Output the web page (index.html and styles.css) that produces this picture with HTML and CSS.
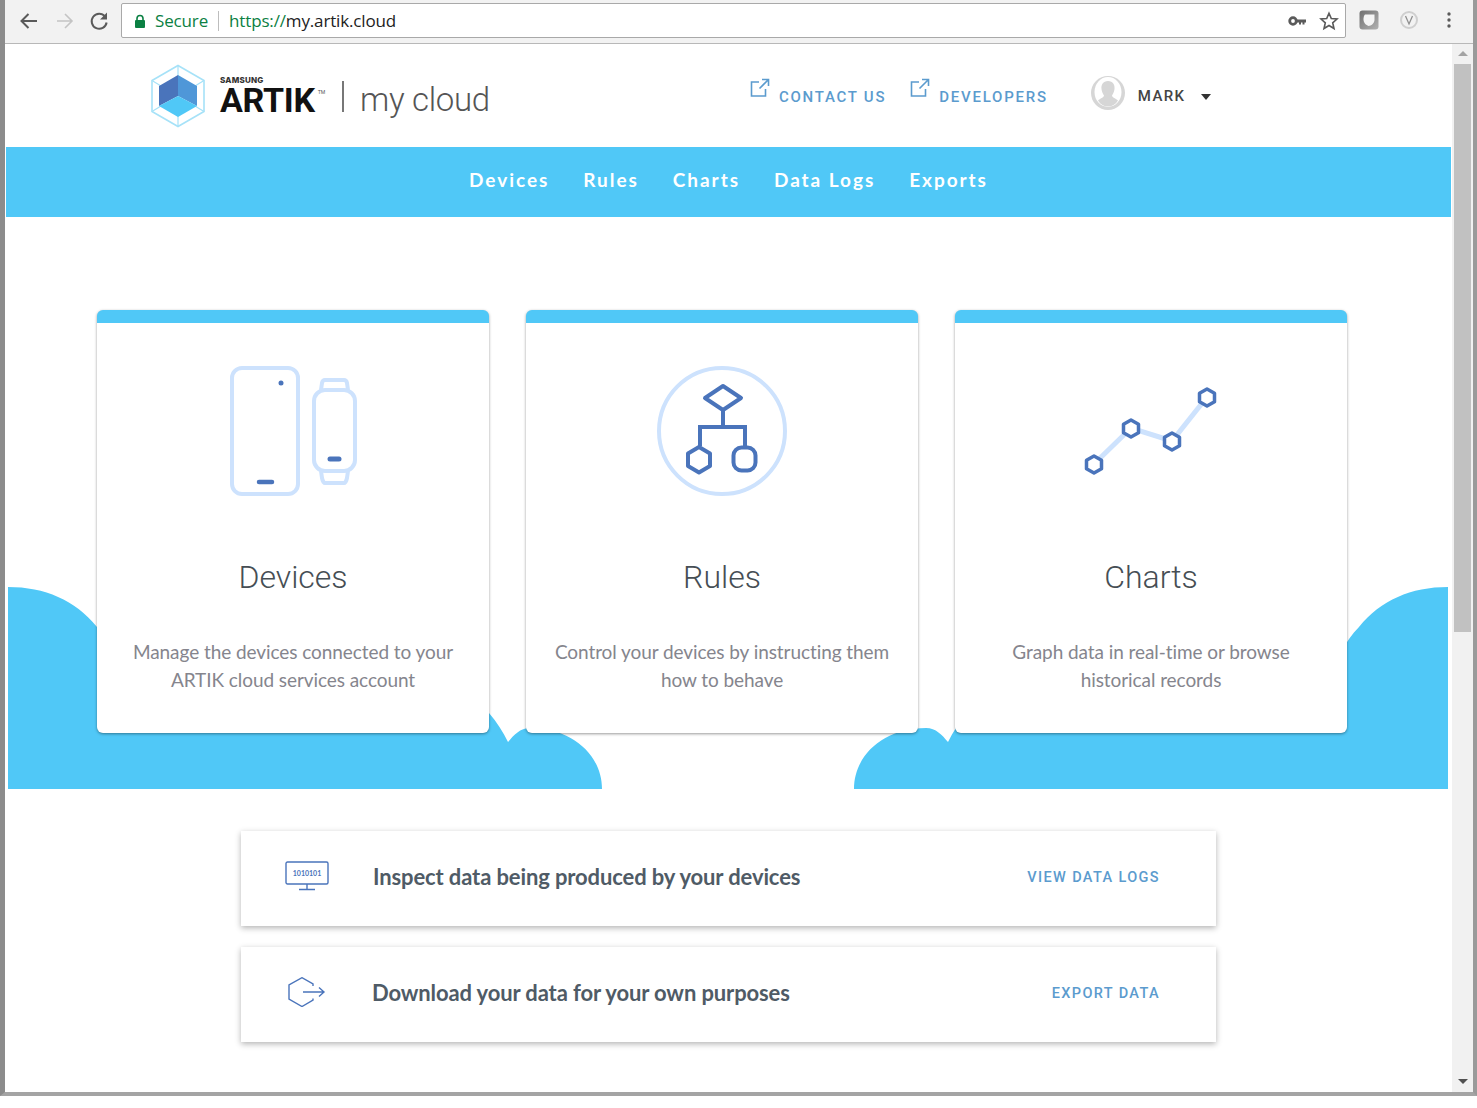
FILE: index.html
```html
<!DOCTYPE html>
<html lang="en">
<head>
<meta charset="utf-8">
<title>my cloud</title>
<link rel="stylesheet" href="styles.css">
</head>
<body>
<div class="window">
  <div class="toolbar">
    <svg class="tb-nav" width="100" height="24" viewBox="0 0 100 24" fill="none">
      <path d="M20 12H5M11.500 5l-7 7 7 7" stroke="#5a5a5a" stroke-width="2"/>
      <path d="M40 12h15M48 5l7 7-7 7" stroke="#c4c4c4" stroke-width="1.600"/>
      <path d="M88 7.500a7.500 7.500 0 1 0 1.600 6" stroke="#5a5a5a" stroke-width="2"/>
      <path d="M90 3.500v7h-7z" fill="#5a5a5a"/>
    </svg>
    <div class="omnibox">
      <svg class="lock" width="12" height="14" viewBox="0 0 12 14"><path d="M3 6V4.500a3 3 0 0 1 6 0V6" fill="none" stroke="#0b8043" stroke-width="1.600"/><rect x="1" y="6" width="10" height="8" rx="1" fill="#0b8043"/></svg>
      <span class="secure">Secure</span>
      <span class="omni-sep"></span>
      <span class="url"><span class="url-scheme">https://</span>my.artik.cloud</span>
      <svg class="omni-key" width="20" height="12" viewBox="0 0 20 12" fill="none"><circle cx="5" cy="6" r="3.300" stroke="#5a5a5a" stroke-width="2.800"/><path d="M8 4.500h10v3h-1.500v2h-2v-2H13v2h-2v-2H8z" fill="#5a5a5a"/></svg>
      <svg class="omni-star" width="20" height="20" viewBox="0 0 20 20" fill="none"><path d="M10 2.200l2.300 5.300 5.700.5-4.300 3.800 1.300 5.700-5-3-5 3 1.300-5.700L2 8l5.700-.5z" stroke="#5a5a5a" stroke-width="1.600"/></svg>
    </div>
    <div class="ext-icons">
      <svg width="20" height="20" viewBox="0 0 20 20"><defs><linearGradient id="ext" x1="0" y1="0" x2="1" y2="1"><stop offset="0" stop-color="#6f6f6f"/><stop offset="1" stop-color="#b2b2b2"/></linearGradient></defs><rect x="0.500" y="0.500" width="19" height="19" rx="3" fill="url(#ext)"/><path d="M6 4.500h9.500v5.500c0 3-3.500 6-6 6-2.500-1-5-3-5-6.500 0-2.500.5-4 1.500-5z" fill="#f4f4f4"/></svg>
      <svg width="20" height="20" viewBox="0 0 20 20" fill="none"><circle cx="10" cy="10" r="8" stroke="#cfcfcf" stroke-width="2"/><path d="M6.500 6l3.500 8 3.500-8" stroke="#8f8f8f" stroke-width="1.300"/></svg>
      <svg class="ext-menu" width="6" height="18" viewBox="0 0 6 18"><circle cx="3" cy="3" r="1.700" fill="#5a5a5a"/><circle cx="3" cy="9" r="1.700" fill="#5a5a5a"/><circle cx="3" cy="15" r="1.700" fill="#5a5a5a"/></svg>
    </div>
  </div>

  <div class="viewport">
    <main class="page">
      <header class="site-header">
        <a class="logo">
          <svg width="56" height="64" viewBox="0 0 56 64">
            <path d="M28 1.500L54 16.500V47.500L28 62.500L2 47.500V16.500Z" fill="none" stroke="#a6e2f8" stroke-width="1.600"/>
            <path d="M28 1.500V12M2 16.500L11 22M54 16.500L45 22M2 47.500L11 42M54 47.500L45 42M28 62.500V52" stroke="#a6e2f8" stroke-width="1.200"/>
            <path d="M28 11L9 22V42L28 32Z" fill="#4a74bb"/>
            <path d="M28 11L47 22V42L28 32Z" fill="#4f97d8"/>
            <path d="M28 32L47 42L28 53L9 42Z" fill="#50c8f7"/>
          </svg>
          <span class="wordmark"><span class="samsung">SAMSUNG</span><span class="artik">ARTIK<sup class="tm">TM</sup></span></span>
          <span class="logo-sep"></span>
          <span class="mycloud">my cloud</span>
        </a>
        <nav class="top-links">
          <a class="ext-link">
            <svg width="20" height="20" viewBox="0 0 20 20" fill="none"><path d="M9 4H1.500v14h14v-7M12 1.500h6.500V8M18.500 1.500L9.500 10.500" stroke="#5b9bce" stroke-width="1.600"/></svg>
            <span>CONTACT US</span>
          </a>
          <a class="ext-link ext-link-second">
            <svg width="20" height="20" viewBox="0 0 20 20" fill="none"><path d="M9 4H1.500v14h14v-7M12 1.500h6.500V8M18.500 1.500L9.500 10.500" stroke="#5b9bce" stroke-width="1.600"/></svg>
            <span>DEVELOPERS</span>
          </a>
          <div class="user">
            <svg width="34" height="34" viewBox="0 0 34 34"><circle cx="17" cy="17" r="17" fill="#d6d6d6"/><ellipse cx="17" cy="16" rx="13.500" ry="15" fill="#fff"/><path d="M17 5c5 0 7 4 6.500 8-.3 3-1.500 5-2.500 6.500 0 2 4 3 6 5-2.500 4-6 6-10 6s-7.500-2-10-6c2-2 6-3 6-5C12 18 10.800 16 10.500 13 10 9 12 5 17 5z" fill="#d6d6d6"/></svg>
            <span class="user-name">MARK</span>
            <span class="caret"></span>
          </div>
        </nav>
      </header>

      <nav class="main-nav">
        <a>Devices</a><a>Rules</a><a>Charts</a><a>Data Logs</a><a>Exports</a>
      </nav>

      <section class="hero">
        <svg class="clouds" width="1445" height="202" viewBox="6 587 1445 202">
          <path fill="#50c8f7" d="M8 587C45 587 75 600 97 627C104 634 110 643 114 650L489 713C497 722 503 732 508 742C514 735 520 728 530 728C572 728 602 755 602 789H8Z"/>
          <path fill="#50c8f7" d="M1448 587C1411 587 1381 600 1359 627C1352 634 1346 643 1342 650L967 713C959 722 953 732 948 742C942 735 936 728 926 728C884 728 854 755 854 789H1448Z"/>
        </svg>
        <div class="cards">
          <article class="card">
            <svg class="card-icon" width="130" height="130" viewBox="-2 0 130 130" fill="none">
              <rect x="2" y="2" width="66" height="126" rx="10" stroke="#cde2fd" stroke-width="4"/>
              <circle cx="51" cy="17" r="2.500" fill="#4a74bb"/>
              <path d="M29 116h13" stroke="#4a74bb" stroke-width="4.500" stroke-linecap="round"/>
              <rect x="84" y="24" width="41" height="81" rx="11" stroke="#cde2fd" stroke-width="4"/>
              <path d="M91 24l1-7c.3-1.500 1.500-3 3-3h19c1.500 0 2.700 1.500 3 3l1 7M91 105l1 7c.3 1.500 1.500 5 3 5h19c1.500 0 2.700-3.500 3-5l1-7" stroke="#cde2fd" stroke-width="4"/>
              <path d="M100 93h9" stroke="#4a74bb" stroke-width="5" stroke-linecap="round"/>
            </svg>
            <h2>Devices</h2>
            <p>Manage the devices connected to your ARTIK cloud services account</p>
          </article>
          <article class="card">
            <svg class="card-icon" width="130" height="130" viewBox="0 0 130 130" fill="none">
              <circle cx="65" cy="65" r="63" stroke="#cde2fd" stroke-width="4"/>
              <path d="M66 20L84 32L66 44L48 32Z" stroke="#4a74bb" stroke-width="4" stroke-linejoin="round"/>
              <path d="M66 44V61M43 80V61H88V80" stroke="#4a74bb" stroke-width="4"/>
              <path d="M42 81L53 87.500V100L42 106.500L31 100V87.500Z" stroke="#4a74bb" stroke-width="4" stroke-linejoin="round"/>
              <rect x="76.500" y="81.500" width="22" height="23" rx="8" stroke="#4a74bb" stroke-width="4"/>
            </svg>
            <h2>Rules</h2>
            <p>Control your devices by instructing them how to behave</p>
          </article>
          <article class="card">
            <svg class="card-icon" width="130" height="130" viewBox="-1 0 130 130" fill="none">
              <path d="M7 98L44 62L85 75L120 31" stroke="#cde2fd" stroke-width="5"/>
              <g stroke="#4a74bb" stroke-width="3.500" fill="#fff" stroke-linejoin="round">
                <path d="M7 90l7.500 4.200v8.600L7 107l-7.500-4.200v-8.600z"/>
                <path d="M44 54l7.500 4.200v8.600L44 71l-7.500-4.200v-8.600z"/>
                <path d="M85 67l7.500 4.200v8.600L85 84l-7.500-4.200v-8.600z"/>
                <path d="M120 23l7.500 4.200v8.600L120 40l-7.500-4.200v-8.600z"/>
              </g>
            </svg>
            <h2>Charts</h2>
            <p>Graph data in real-time or browse historical records</p>
          </article>
        </div>
      </section>

      <section class="rows">
        <div class="row">
          <svg class="row-icon" width="44" height="30" viewBox="0 0 44 30" fill="none">
            <rect x="1" y="1" width="42" height="22" rx="1.500" stroke="#4a74bb" stroke-width="1.400"/>
            <path d="M22 23v5M14 28.500h16" stroke="#4a74bb" stroke-width="1.400"/>
            <text class="binary" x="22" y="15" text-anchor="middle">1010101</text>
          </svg>
          <span class="row-title">Inspect data being produced by your devices</span>
          <a class="row-link">VIEW DATA LOGS</a>
        </div>
        <div class="row">
          <svg class="row-icon row-icon-export" width="38" height="30" viewBox="0 0 38 30" fill="none">
            <path d="M25 21.500V23L14 29.500 1 22V8L14 .7 25 7v2" stroke="#4a74bb" stroke-width="1.400"/>
            <path d="M15 15h21M31 10.500L36 15l-5 4.500" stroke="#4a74bb" stroke-width="1.400"/>
          </svg>
          <span class="row-title">Download your data for your own purposes</span>
          <a class="row-link">EXPORT DATA</a>
        </div>
      </section>
    </main>

    <aside class="scrollbar">
      <span class="arrow-up"></span>
      <span class="thumb"></span>
      <span class="arrow-down"></span>
    </aside>
  </div>
</div>
</body>
</html>
```
FILE: styles.css
```css
* { box-sizing: border-box; }
html, body { margin: 0; padding: 0; background: #fff; }
body { font-family: "Lato", "Open Sans", sans-serif; height: 1108px; overflow: hidden; }
a { text-decoration: none; cursor: pointer; }

.window {
  width: 1477px;
  height: 1096px;
  border-left: 5px solid #8c8c8c;
  border-right: 4px solid #9a9a9a;
  border-bottom: 4px solid #a4a4a4;
  display: flex;
  flex-direction: column;
  overflow: hidden;
}

.toolbar {
  height: 44px;
  flex: none;
  background: #f2f2f2;
  border-bottom: 1px solid #b8b8b8;
  display: flex;
  align-items: flex-start;
  padding: 3px 0 0 12px;
}
.tb-nav { margin: 6px 4px 0 0; flex: none; }
.omnibox {
  width: 1225px;
  height: 35px;
  background: #fff;
  border: 1px solid #a9a9a9;
  border-radius: 2px;
  display: flex;
  align-items: center;
  padding-left: 12px;
  font-family: "Open Sans", sans-serif;
  font-size: 17px;
  letter-spacing: -0.15px;
  flex: none;
}
.lock { flex: none; }
.secure { color: #0b8043; margin-left: 9px; }
.omni-sep { width: 1px; height: 20px; background: #bdbdbd; margin: 0 10px 0 10px; }
.url { color: #222; flex: 1; }
.url-scheme { color: #0b8043; }
.omni-key { margin-right: 11px; }
.omni-star { margin-right: 6px; }
.ext-icons { display: flex; align-items: center; padding-left: 13px; margin-top: 7px; gap: 20px; }
.ext-menu { margin-left: 7px; }

.viewport { flex: 1; display: flex; min-height: 0; }
.page { width: 1447px; flex: none; padding-left: 1px; }

.site-header {
  height: 103px;
  display: flex;
  align-items: flex-start;
  padding-left: 144px;
}
.logo { display: flex; align-items: flex-start; padding-top: 20px; }
.logo > svg { flex: none; }
.wordmark { display: flex; flex-direction: column; margin-left: 14px; padding-top: 12px; }
.samsung { font: 800 8px/9px "Inter", sans-serif; color: #333; letter-spacing: .2px; }
.artik { font: 700 34px/30px "Roboto", sans-serif; color: #111; letter-spacing: -.3px; display: flex; align-items: flex-start; }
.tm { font: 400 5px/8px "Inter", sans-serif; color: #555; margin: 3px 0 0 3px; }
.logo-sep { width: 2px; height: 31px; background: #777; margin: 17px 16px 0 17px; }
.mycloud { font: 300 33px/40px "Roboto", sans-serif; color: #555; margin-top: 16px; letter-spacing: -.3px; }

.top-links { display: flex; align-items: flex-start; margin-left: 260px; padding-top: 34px; }
.ext-link { display: flex; align-items: flex-start; color: #5b9bce; font: 500 15px/20px "Roboto", sans-serif; letter-spacing: 1.750px; }
.ext-link span { margin: 9px 0 0 9px; }
.ext-link-second { margin-left: 24px; }
.user { display: flex; align-items: flex-start; margin-left: 43px; margin-top: -2px; }
.user svg { flex: none; }
.user-name { font: 500 15px/20px "Roboto", sans-serif; color: #444; letter-spacing: 1.400px; margin: 10px 0 0 13px; }
.caret { width: 0; height: 0; border: 5px solid transparent; border-top: 6px solid #333; border-bottom: 0; margin: 18px 0 0 16px; }

.main-nav {
  height: 70px;
  background: #50c8f7;
  display: flex;
  justify-content: center;
  align-items: center;
  gap: 34px;
  margin-right: 1px;
  padding-bottom: 4px;
}
.main-nav a { color: #fff; font: 700 19px/24px "Lato", sans-serif; letter-spacing: 1.950px; }

.hero { position: relative; height: 572px; padding: 93px 0 0 91px; }
.clouds { position: absolute; left: 0; bottom: 0; }
.cards { position: relative; display: flex; gap: 37px; }
.card {
  width: 392px;
  height: 423px;
  background: #fff;
  border-top: 13px solid #50c8f7;
  border-radius: 6px;
  box-shadow: 0 1px 3px rgba(0, 0, 0, .4);
  display: flex;
  flex-direction: column;
  align-items: center;
  padding-top: 43px;
  text-align: center;
}
.card-icon { flex: none; overflow: visible; }
.card h2 { margin: 61px 0 0; font: 300 32px/40px "Roboto", sans-serif; color: #464e54; }
.card p { margin: 41px 0 0; width: 345px; font: 400 19px/28px "Lato", sans-serif; color: #85858d; letter-spacing: -.07px; }

.rows { display: flex; flex-direction: column; gap: 21px; padding: 42px 0 0 235px; }
.row {
  width: 975px;
  height: 95px;
  background: #fff;
  box-shadow: 0 2px 6px rgba(0, 0, 0, .3);
  display: flex;
  align-items: center;
  padding: 0 56px 4px 44px;
}
.row-icon { flex: none; margin: -2px 44px 0 0; }
.row-icon-export { margin-left: 3px; margin-right: 46px; }
.binary { font: 700 7px "Lato", sans-serif; fill: #4a74bb; }
.row-title { flex: 1; font: 700 22px/28px "Lato", sans-serif; color: #4f5b66; letter-spacing: -.12px; }
.row-link { font: 500 14.500px/20px "Roboto", sans-serif; letter-spacing: 1.380px; color: #5b9bce; margin-top: 2px; }

.scrollbar {
  flex: 1;
  background: #f1f1f1;
  display: flex;
  flex-direction: column;
  align-items: center;
  padding: 7px 0 8px;
}
.arrow-up, .arrow-down { width: 0; height: 0; border: 5px solid transparent; border-top: 0; border-bottom: 5px solid #a3a3a3; flex: none; }
.arrow-down { border-top: 5px solid #505050; border-bottom: 0; margin-top: auto; }
.thumb { width: 17px; height: 568px; background: #c1c1c1; margin-top: 8px; flex: none; }
```
